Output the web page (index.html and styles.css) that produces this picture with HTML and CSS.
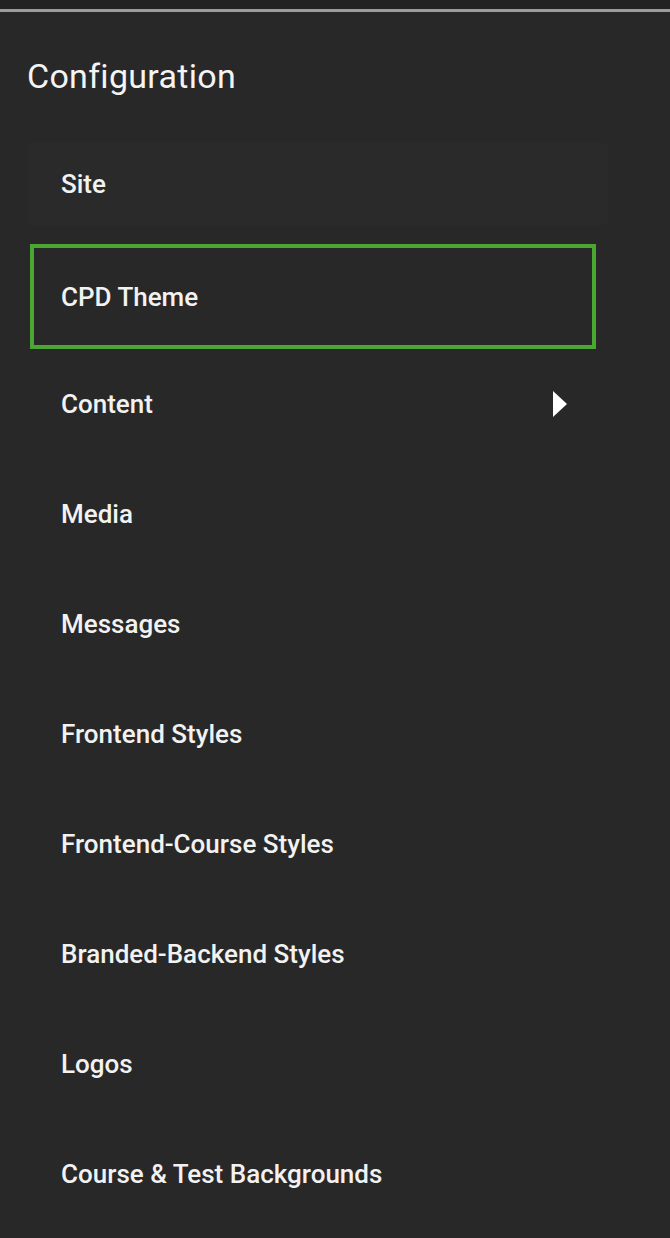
FILE: index.html
```html
<!DOCTYPE html>
<html lang="en">
<head>
<meta charset="utf-8">
<title>Configuration</title>
<link rel="stylesheet" href="styles.css">
</head>
<body>
<div class="topbar"></div>
<nav class="panel">
  <h1 class="title">Configuration</h1>
  <ul class="menu">
    <li class="row"><div class="box box-hover">Site</div></li>
    <li class="row"><div class="box box-active">CPD Theme</div></li>
    <li class="row"><div class="box">Content<svg class="caret" width="16" height="26" viewBox="0 0 16 26"><path d="M1 0 L15 13 L1 26 Z" fill="#ffffff"/></svg></div></li>
    <li class="row"><div class="box">Media</div></li>
    <li class="row"><div class="box">Messages</div></li>
    <li class="row"><div class="box">Frontend Styles</div></li>
    <li class="row"><div class="box">Frontend-Course Styles</div></li>
    <li class="row"><div class="box">Branded-Backend Styles</div></li>
    <li class="row"><div class="box">Logos</div></li>
    <li class="row"><div class="box">Course &amp; Test Backgrounds</div></li>
  </ul>
</nav>
</body>
</html>
```
FILE: styles.css
```css
html, body {
  margin: 0;
  padding: 0;
  background: #282828;
}
body {
  font-family: Roboto, "Liberation Sans", Arial, sans-serif;
  color: #f2f2f2;
  overflow: hidden;
}
.topbar {
  height: 9px;
  background: #232323;
  border-bottom: 3px solid #9d9d9d;
}
.panel {
  padding: 0;
}
.title {
  margin: 0;
  padding: 44px 0 0 27px;
  height: 74px;
  font-size: 34px;
  font-weight: 400;
  line-height: 40px;
  letter-spacing: 0.3px;
  color: #f4f4f4;
}
.menu {
  list-style: none;
  margin: 0;
  padding: 0;
}
.row {
  height: 110px;
  display: flex;
  padding: 0 62px 0 28px;
  box-sizing: border-box;
}
.box {
  flex: 1;
  display: flex;
  align-items: center;
  justify-content: space-between;
  padding: 0 40px 0 33px;
  margin: 13px 0 15px;
  font-size: 26px;
  font-weight: 500;
  letter-spacing: 0;
}
.box-hover {
  background: #2a2a2a;
  border-radius: 4px;
}
.box-active {
  margin: 4px 12px 1px 2px;
  border: 4px solid #4aa832;
  padding-left: 27px;
}
.caret {
  display: block;
}
```
